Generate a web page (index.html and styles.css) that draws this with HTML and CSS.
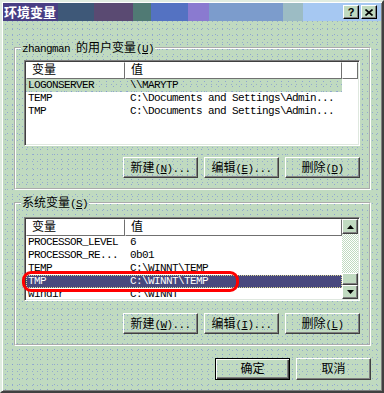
FILE: index.html
```html
<!DOCTYPE html>
<html>
	<head>
		<meta charset="utf-8">
		<title>环境变量</title>
		<link rel="stylesheet" href="styles.css">
	</head>
	<body>
		<div class="window">
			<div class="titlebar">
				<span class="title">环境变量</span>
				<span class="tbtn help">?</span>
				<span class="tbtn close">
					<svg width="8" height="7" viewBox="0 0 8 7"><path d="M0.5 0.5L7.5 6.5M7.5 0.5L0.5 6.5" stroke="#000" stroke-width="1.6"/></svg>
				</span>
			</div>
			<div class="main">
				<fieldset class="group user">
					<legend>zhangman <span class="cn">的用户变量</span>(<u>U</u>)</legend>
					<div class="list list-user">
						<div class="head">
							<div class="hc c1"><span class="cn">变量</span></div>
							<div class="hc c2"><span class="cn">值</span></div>
							<div class="hc c3"></div>
						</div>
						<div class="rows">
							<div class="row soft"><span class="c1">LOGONSERVER</span><span class="c2">\\MARYTP</span></div>
							<div class="row"><span class="c1">TEMP</span><span class="c2">C:\Documents and Settings\Admin...</span></div>
							<div class="row"><span class="c1">TMP</span><span class="c2">C:\Documents and Settings\Admin...</span></div>
						</div>
					</div>
					<div class="btns">
						<button class="btn"><span class="cn">新建</span>(<u>N</u>)...</button>
						<button class="btn"><span class="cn">编辑</span>(<u>E</u>)...</button>
						<button class="btn"><span class="cn">删除</span>(<u>D</u>)</button>
					</div>
				</fieldset>
				<fieldset class="group sys">
					<legend><span class="cn">系统变量</span>(<u>S</u>)</legend>
					<div class="list list-sys">
						<div class="list-body">
							<div class="head">
								<div class="hc c1"><span class="cn">变量</span></div>
								<div class="hc c2"><span class="cn">值</span></div>
							</div>
							<div class="rows">
								<div class="row"><span class="c1">PROCESSOR_LEVEL</span><span class="c2">6</span></div>
								<div class="row"><span class="c1">PROCESSOR_RE...</span><span class="c2">0b01</span></div>
								<div class="row"><span class="c1">TEMP</span><span class="c2">C:\WINNT\TEMP</span></div>
								<div class="row selected"><span class="c1">TMP</span><span class="c2">C:\WINNT\TEMP</span></div>
								<div class="row"><span class="c1">windir</span><span class="c2">C:\WINNT</span></div>
							</div>
						</div>
						<div class="scrollbar">
							<div class="sb-btn up">
								<svg width="7" height="4" viewBox="0 0 7 4"><polygon points="3.5,0 7,4 0,4" fill="#000"/></svg>
							</div>
							<div class="sb-track"></div>
							<div class="sb-thumb"></div>
							<div class="sb-btn down">
								<svg width="7" height="4" viewBox="0 0 7 4"><polygon points="0,0 7,0 3.5,4" fill="#000"/></svg>
							</div>
						</div>
						<div class="mark"></div>
					</div>
					<div class="btns">
						<button class="btn"><span class="cn">新建</span>(<u>W</u>)...</button>
						<button class="btn"><span class="cn">编辑</span>(<u>I</u>)...</button>
						<button class="btn"><span class="cn">删除</span>(<u>L</u>)</button>
					</div>
				</fieldset>
				<div class="actions">
					<button class="btn default"><span class="cn">确定</span></button>
					<button class="btn"><span class="cn">取消</span></button>
				</div>
			</div>
		</div>
	</body>
</html>
```

FILE: styles.css
```css
*{
	margin: 0;
	padding: 0;
	box-sizing: border-box;
}
body{
	width: 384px;
	height: 393px;
	overflow: hidden;
	font-family: "Liberation Mono", "Noto Sans CJK SC", monospace;
	font-size: 11px;
	letter-spacing: -0.6px;
	color: #000;
}
.cn{
	font-family: "Noto Sans CJK SC", sans-serif;
	font-size: 12px;
	letter-spacing: 0;
	line-height: 12px;
}
u{
	text-underline-offset: 1px;
}
.window, .soft{
	background-color: #c0dac0;
	background-image: radial-gradient(circle, rgba(120,140,215,0.7) 0.6px, transparent 0.9px), radial-gradient(circle, rgba(120,140,215,0.6) 0.6px, transparent 0.9px);
	background-size: 7px 5px, 5px 7px;
	background-position: 0 0, 3px 2px;
}
.window{
	width: 384px;
	height: 393px;
	border: 2px solid;
	border-color: #e0ece0 #404040 #404040 #e0ece0;
	box-shadow: inset 1px 1px 0 #fff, inset -1px -1px 0 #808080;
	padding: 1px;
}
.titlebar{
	display: flex;
	align-items: center;
	height: 18px;
	background: linear-gradient(to right, #483e84 0 55px, #3e5878 55px 91px, #5a4a72 91px 130px, #507a74 130px 148px, #5472c2 148px 185px, #8a7ad0 185px 206px, #7c9ccc 206px 280px, #9cbcc4 280px 300px, #a6c8f2 300px);
}
.title{
	font-family: "Noto Sans CJK SC", sans-serif;
	font-size: 13px;
	font-weight: bold;
	letter-spacing: 0;
	line-height: 18px;
	color: #fff;
	padding-left: 1px;
}
.tbtn{
	display: flex;
	align-items: center;
	justify-content: center;
	width: 16px;
	height: 14px;
	margin-left: 2px;
	background: #c0dac0;
	border: 1px solid;
	border-color: #fff #000 #000 #fff;
	box-shadow: inset -1px -1px 0 #808080;
	font-family: "Liberation Sans", sans-serif;
	font-weight: bold;
	font-size: 11px;
	letter-spacing: 0;
}
.help{
	margin-left: auto;
}
.close{
	margin-right: 4px;
}
.main{
	padding: 20px 10px 0 11px;
}
.group{
	border: 2px groove #fff;
	padding: 5px 9px 10px 8px;
}
.group legend{
	height: 14px;
	padding: 0 1px;
	margin-left: -3px;
	line-height: 14px;
}
.sys{
	margin-top: 6px;
	padding-top: 7px;
}
.list{
	position: relative;
	display: flex;
	flex-direction: column;
	background: #fff;
	border: 1px solid;
	border-color: #808080 #fff #fff #808080;
	box-shadow: inset 1px 1px 0 #404040, inset -1px -1px 0 #dfe8df;
	padding: 1px;
}
.list-user{
	height: 86px;
}
.list-sys{
	height: 84px;
	flex-direction: row;
}
.list-body{
	flex: 1;
	display: flex;
	flex-direction: column;
	min-width: 0;
}
.head{
	display: flex;
	height: 17px;
	flex: none;
}
.hc{
	height: 17px;
	line-height: 15px;
	padding-left: 5px;
	border: 1px solid;
	border-color: #fff #707070 #707070 #fff;
}
.head .c1{
	width: 99px;
}
.head .c2{
	width: 217px;
}
.head .c3{
	flex: 1;
}
.rows{
	flex: 1;
	overflow: hidden;
}
.row{
	display: flex;
	width: 316px;
	height: 13px;
	line-height: 13px;
}
.row .c1{
	width: 99px;
	padding-left: 2px;
	white-space: nowrap;
}
.row .c2{
	padding-left: 5px;
	white-space: nowrap;
}
.selected{
	background: #48487e;
	color: #fff;
	border: 1px dotted #d8d890;
	line-height: 11px;
}
.selected .c1{
	padding-left: 1px;
}
.selected .c2{
	padding-left: 4px;
}
.scrollbar{
	display: flex;
	flex-direction: column;
	width: 16px;
}
.sb-btn, .sb-thumb{
	display: flex;
	align-items: center;
	justify-content: center;
	background: #c0dac0;
	border: 1px solid;
	border-color: #fff #404040 #404040 #fff;
	box-shadow: inset -1px -1px 0 #808080;
}
.up{
	height: 15px;
}
.down{
	height: 14px;
}
.sb-thumb{
	height: 12px;
}
.sb-track{
	flex: 1;
	background: conic-gradient(#fff 25%, #c0dac0 0 50%, #fff 0 75%, #c0dac0 0);
	background-size: 2px 2px;
}
.mark{
	position: absolute;
	left: -3px;
	top: 53px;
	width: 217px;
	height: 21px;
	border: 3px solid #f00;
	border-radius: 9px;
}
.btns, .actions{
	display: flex;
	justify-content: flex-end;
	gap: 6px;
}
.btns{
	margin-top: 11px;
}
.sys .btns{
	margin-top: 12px;
}
.btn{
	width: 75px;
	height: 21px;
	font-family: "Liberation Mono", "Noto Sans CJK SC", monospace;
	font-size: 11px;
	letter-spacing: -0.6px;
	color: #000;
	background: transparent;
	border: 1px solid;
	border-color: #fff #404040 #404040 #fff;
	box-shadow: inset -1px -1px 0 #808080;
}
.actions{
	margin-top: 12px;
}
.actions .btn{
	height: 22px;
}
.default{
	border-color: #000;
	box-shadow: inset 1px 1px 0 #fff, inset -1px -1px 0 #404040, inset -2px -2px 0 #808080;
}
```
